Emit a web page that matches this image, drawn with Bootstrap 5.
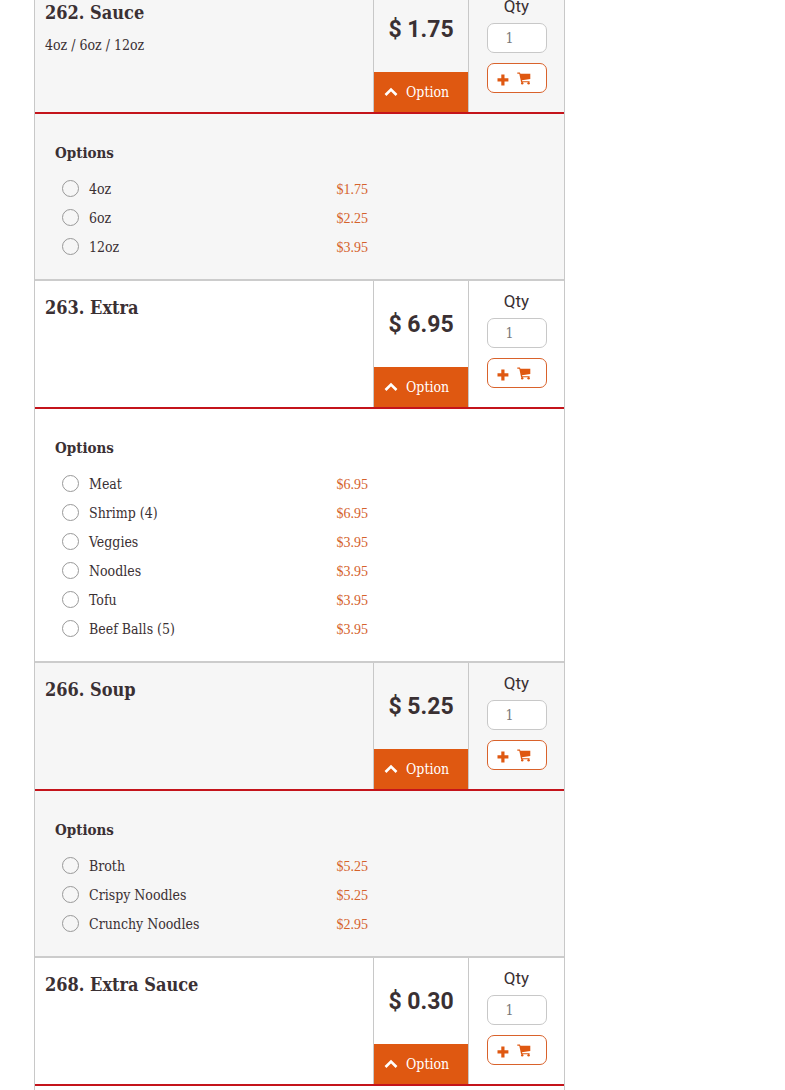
<!DOCTYPE html>
<html lang="en">
<head>
<meta charset="utf-8">
<meta name="viewport" content="width=device-width, initial-scale=1">
<title>Menu</title>
<link rel="stylesheet" href="https://cdn.jsdelivr.net/npm/bootstrap@5.3.0/dist/css/bootstrap.min.css">
<style>
  body { font-family: "DejaVu Serif Condensed", "DejaVu Serif", serif; font-size: 14px; color: #3a3033; background: #fff; overflow-x: hidden; }
  .menu-list { max-width: 531px; margin-left: 34px; margin-top: -16px; border: solid #c8c8c8; border-width: 0 1px; }
  .menu-item { border-top: 2px solid #ccc; }
  .menu-item:nth-child(odd) { background: #f6f6f6; }
  .item-head { min-height: 128px; border-bottom: 2px solid #c4141b; }
  .item-name { font-size: 18px; font-weight: 700; line-height: 24px; margin: 0 0 10px; }
  .item-info { padding: 15px 10px; }
  .item-price { flex: 0 0 96px; }
  .item-qty { flex: 0 0 95px; }
  .item-price { border: solid #c8c8c8; border-width: 0 1px; }
  .amount { font: 700 23px/28px Roboto, sans-serif; padding-top: 2px; }
  .btn-option { background: #df5811; color: #fff; border: 0; border-radius: 0; height: 40px; font-size: 14px; font-family: inherit; padding: 0 0 0 10px; }
  .btn-option:hover { background: #c54c0c; color: #fff; }
  .item-qty label { font: 17px/20px Roboto, sans-serif; margin: 10px 0 7px; }
  .qty-box { width: 60px; height: 30px; border: 1px solid #c8c8c8; border-radius: 7px; font-size: 14px; padding: 0 0 0 18px; }
  .qty-box::placeholder { color: #777; }
  .btn-cart { width: 60px; height: 30px; border: 1px solid #d9622b; border-radius: 7px; background: #fff; color: #df5811; padding: 0 5px 0 0; margin-top: 10px; }
  .options { padding: 27px 20px 18px; margin: 0; }
  .options legend { font-size: 15px; font-weight: 700; line-height: 24px; margin: 0 0 9px; }
  .option-row { max-width: 313px; height: 29px; padding-left: 7px; }
  .option-row label, .option-price { padding-top: 2px; }
  .option-row .form-check-input { width: 17px; height: 17px; border: 1px solid #999; background-color: transparent; margin: 0 10px 0 0; }
  .option-price { font: 14px/20px "Liberation Serif", serif; color: #d5622c; }
</style>
</head>
<body>
<svg class="d-none" aria-hidden="true">
  <symbol id="chevron" viewBox="0 0 14 10"><path d="M1.5 8 7 2.5 12.5 8" fill="none" stroke="#fff" stroke-width="2.6"/></symbol>
  <symbol id="plus" viewBox="0 0 12 12"><path d="M4.3.5h3.2v3.8h3.9v3.2H7.5v3.9H4.3V7.5H.5V4.3h3.8z" fill="currentColor"/></symbol>
  <symbol id="cart" viewBox="0 0 14 13"><path d="M.3.5h2.6l.5 1.2h9.9v5.4L5 8.2l.2 1h7.4v1H4.1L2.3 1.7h-2z" fill="currentColor"/><circle cx="5.2" cy="11.2" r="1.2" fill="currentColor"/><circle cx="11.6" cy="11.2" r="1.2" fill="currentColor"/></symbol>
</svg>
<main class="menu-list">
  <section class="menu-item">
    <div class="item-head d-flex">
      <div class="item-info flex-grow-1"><h2 class="item-name">262. Sauce</h2><p class="m-0">4oz / 6oz / 12oz</p></div>
      <div class="item-price d-flex flex-column">
        <div class="amount flex-grow-1 d-flex align-items-center justify-content-center">$ 1.75</div>
        <button type="button" class="btn btn-option d-flex align-items-center"><svg width="14" height="10" class="me-1"><use href="#chevron"/></svg><span class="ps-1">Option</span></button>
      </div>
      <div class="item-qty d-flex flex-column align-items-center">
        <label for="q262">Qty</label><input id="q262" class="qty-box" type="text" placeholder="1">
        <button type="button" class="btn-cart d-flex align-items-center justify-content-center" aria-label="Add to cart"><svg width="12" height="12" class="me-2 mt-1"><use href="#plus"/></svg><svg width="14" height="13"><use href="#cart"/></svg></button>
      </div>
    </div>
    <fieldset class="options">
      <legend>Options</legend>
      <div class="option-row d-flex align-items-center"><input class="form-check-input" type="radio" name="o262" id="a1"><label class="flex-grow-1" for="a1">4oz</label><span class="option-price">$1.75</span></div>
      <div class="option-row d-flex align-items-center"><input class="form-check-input" type="radio" name="o262" id="a2"><label class="flex-grow-1" for="a2">6oz</label><span class="option-price">$2.25</span></div>
      <div class="option-row d-flex align-items-center"><input class="form-check-input" type="radio" name="o262" id="a3"><label class="flex-grow-1" for="a3">12oz</label><span class="option-price">$3.95</span></div>
    </fieldset>
  </section>
  <section class="menu-item">
    <div class="item-head d-flex">
      <div class="item-info flex-grow-1"><h2 class="item-name">263. Extra</h2></div>
      <div class="item-price d-flex flex-column">
        <div class="amount flex-grow-1 d-flex align-items-center justify-content-center">$ 6.95</div>
        <button type="button" class="btn btn-option d-flex align-items-center"><svg width="14" height="10" class="me-1"><use href="#chevron"/></svg><span class="ps-1">Option</span></button>
      </div>
      <div class="item-qty d-flex flex-column align-items-center">
        <label for="q263">Qty</label><input id="q263" class="qty-box" type="text" placeholder="1">
        <button type="button" class="btn-cart d-flex align-items-center justify-content-center" aria-label="Add to cart"><svg width="12" height="12" class="me-2 mt-1"><use href="#plus"/></svg><svg width="14" height="13"><use href="#cart"/></svg></button>
      </div>
    </div>
    <fieldset class="options">
      <legend>Options</legend>
      <div class="option-row d-flex align-items-center"><input class="form-check-input" type="radio" name="o263" id="b1"><label class="flex-grow-1" for="b1">Meat</label><span class="option-price">$6.95</span></div>
      <div class="option-row d-flex align-items-center"><input class="form-check-input" type="radio" name="o263" id="b2"><label class="flex-grow-1" for="b2">Shrimp (4)</label><span class="option-price">$6.95</span></div>
      <div class="option-row d-flex align-items-center"><input class="form-check-input" type="radio" name="o263" id="b3"><label class="flex-grow-1" for="b3">Veggies</label><span class="option-price">$3.95</span></div>
      <div class="option-row d-flex align-items-center"><input class="form-check-input" type="radio" name="o263" id="b4"><label class="flex-grow-1" for="b4">Noodles</label><span class="option-price">$3.95</span></div>
      <div class="option-row d-flex align-items-center"><input class="form-check-input" type="radio" name="o263" id="b5"><label class="flex-grow-1" for="b5">Tofu</label><span class="option-price">$3.95</span></div>
      <div class="option-row d-flex align-items-center"><input class="form-check-input" type="radio" name="o263" id="b6"><label class="flex-grow-1" for="b6">Beef Balls (5)</label><span class="option-price">$3.95</span></div>
    </fieldset>
  </section>
  <section class="menu-item">
    <div class="item-head d-flex">
      <div class="item-info flex-grow-1"><h2 class="item-name">266. Soup</h2></div>
      <div class="item-price d-flex flex-column">
        <div class="amount flex-grow-1 d-flex align-items-center justify-content-center">$ 5.25</div>
        <button type="button" class="btn btn-option d-flex align-items-center"><svg width="14" height="10" class="me-1"><use href="#chevron"/></svg><span class="ps-1">Option</span></button>
      </div>
      <div class="item-qty d-flex flex-column align-items-center">
        <label for="q266">Qty</label><input id="q266" class="qty-box" type="text" placeholder="1">
        <button type="button" class="btn-cart d-flex align-items-center justify-content-center" aria-label="Add to cart"><svg width="12" height="12" class="me-2 mt-1"><use href="#plus"/></svg><svg width="14" height="13"><use href="#cart"/></svg></button>
      </div>
    </div>
    <fieldset class="options">
      <legend>Options</legend>
      <div class="option-row d-flex align-items-center"><input class="form-check-input" type="radio" name="o266" id="c1"><label class="flex-grow-1" for="c1">Broth</label><span class="option-price">$5.25</span></div>
      <div class="option-row d-flex align-items-center"><input class="form-check-input" type="radio" name="o266" id="c2"><label class="flex-grow-1" for="c2">Crispy Noodles</label><span class="option-price">$5.25</span></div>
      <div class="option-row d-flex align-items-center"><input class="form-check-input" type="radio" name="o266" id="c3"><label class="flex-grow-1" for="c3">Crunchy Noodles</label><span class="option-price">$2.95</span></div>
    </fieldset>
  </section>
  <section class="menu-item pb-1">
    <div class="item-head d-flex">
      <div class="item-info flex-grow-1"><h2 class="item-name">268. Extra Sauce</h2></div>
      <div class="item-price d-flex flex-column">
        <div class="amount flex-grow-1 d-flex align-items-center justify-content-center">$ 0.30</div>
        <button type="button" class="btn btn-option d-flex align-items-center"><svg width="14" height="10" class="me-1"><use href="#chevron"/></svg><span class="ps-1">Option</span></button>
      </div>
      <div class="item-qty d-flex flex-column align-items-center">
        <label for="q268">Qty</label><input id="q268" class="qty-box" type="text" placeholder="1">
        <button type="button" class="btn-cart d-flex align-items-center justify-content-center" aria-label="Add to cart"><svg width="12" height="12" class="me-2 mt-1"><use href="#plus"/></svg><svg width="14" height="13"><use href="#cart"/></svg></button>
      </div>
    </div>
  </section>
</main>
<script src="https://cdn.jsdelivr.net/npm/bootstrap@5.3.0/dist/js/bootstrap.bundle.min.js"></script>
</body>
</html>
